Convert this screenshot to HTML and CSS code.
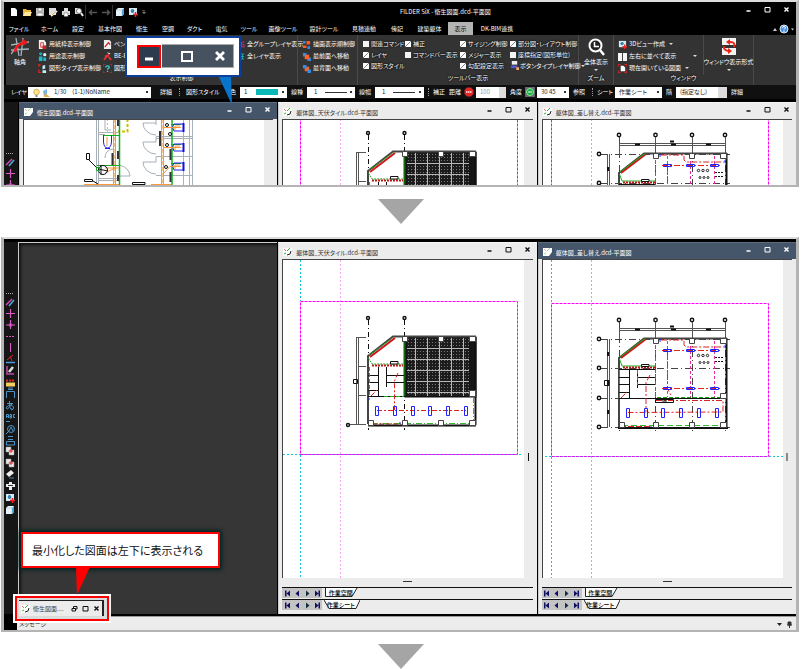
FILE: index.html
```html
<!DOCTYPE html>
<html lang="ja">
<head>
<meta charset="utf-8">
<title>FILDER SiX</title>
<link rel="stylesheet" href="styles.css">
</head>
<body>
<svg class="defs" aria-hidden="true">
  <defs>
    <pattern id="tiles" width="3" height="3" patternUnits="userSpaceOnUse"><rect width="3" height="3" fill="#1c1c1c"/><rect width="1" height="1" fill="#777"/></pattern>
    <pattern id="tilelines" x="404" y="338" width="12" height="11" patternUnits="userSpaceOnUse"><path d="M0 10.500H12M11.500 0V11" stroke="#b8b8b8" fill="none"/></pattern>
    <symbol id="doc" viewBox="0 0 9 9"><path d="M0 1H9V5L6 9H0Z" fill="#fff"/><path d="M1 7l2-1M4 4l3-3" stroke="#2b2" fill="none"/><path d="M1 2l2 2" stroke="#e66"/><path d="M4 8q4 0 4-4" stroke="#222" fill="none"/></symbol>
    <symbol id="docon" viewBox="0 0 9 9"><path d="M0 1H9V5L6 9H0Z" fill="#fff"/><path d="M1 7l2-1M4 4l3-3" stroke="#9d9" fill="none"/><path d="M1 2l2 2" stroke="#eaa"/></symbol>
    <symbol id="min" viewBox="0 0 7 7"><path d="M1.500 5H5.500" stroke="currentColor" stroke-width="1.500"/></symbol>
    <symbol id="max" viewBox="0 0 7 7"><path d="M1 1.500H6V6H1ZM1 1.500H6" fill="none" stroke="currentColor"/></symbol>
    <symbol id="cls" viewBox="0 0 7 7"><path d="M1.500 1.500L5.500 5.500M5.500 1.500L1.500 5.500" stroke="currentColor" stroke-width="1.400"/></symbol>
    <symbol id="rst" viewBox="0 0 7 7"><path d="M2.500 3V1.500H6V4H4.500M1 3.500H4.500V6H1Z" fill="none" stroke="currentColor"/></symbol>
    <symbol id="first" viewBox="0 0 9 9"><path d="M2 1.500H3.500V7.500H2ZM7 1.500V7.500L3.500 4.500Z" fill="#101060"/></symbol>
    <symbol id="prev" viewBox="0 0 9 9"><path d="M6 1.500V7.500L2.500 4.500Z" fill="#101060"/></symbol>
    <symbol id="next" viewBox="0 0 9 9"><path d="M3 1.500V7.500L6.500 4.500Z" fill="#103040"/></symbol>
    <symbol id="last" viewBox="0 0 9 9"><path d="M5.500 1.500H7V7.500H5.500ZM2 1.500V7.500L5.500 4.500Z" fill="#101060"/></symbol>
    <symbol id="search" viewBox="0 0 10 10"><path d="M1 1H6V7H1Z" fill="#ddd"/><circle cx="5" cy="4" r="2.500" fill="#fff" stroke="#777"/><path d="M7 6L9 9" stroke="#eee" stroke-width="2"/></symbol>
    <symbol id="cube" viewBox="0 0 10 10"><path d="M1 3L3 1H9V7L7 9H1Z" fill="#e9f2f8"/><path d="M7 3L9 1V7L7 9Z" fill="#3ba7de"/><path d="M1 3H7V9" stroke="#8bc" fill="none" stroke-width=".5"/></symbol>
    <symbol id="cube2" viewBox="0 0 10 10"><path d="M1 1H9V8H1Z" fill="#cfe8f6"/><circle cx="4.500" cy="4" r="2.500" fill="#38a" stroke="#fff"/><path d="M5 7.500H10M7.500 5V10" stroke="#e22" stroke-width="1.500"/></symbol>
    <symbol id="pages" viewBox="0 0 10 10"><path d="M1 1H6V6H1ZM4 4H9V9H4Z" fill="#e8e8e8" stroke="#999" stroke-width=".5"/><path d="M4 5H8M6 3V7" stroke="#e33"/></symbol>
    <symbol id="front" viewBox="0 0 10 10"><path d="M1 1H5V5H1ZM6 6H10V10H6Z" fill="#2f8fe8"/><path d="M3 3H8V8H3Z" fill="#ff6424"/></symbol>
    <symbol id="back" viewBox="0 0 10 10"><path d="M3 3H8V8H3Z" fill="#ff6424"/><path d="M1 1H5V5H1ZM6 6H10V10H6Z" fill="#2f8fe8"/></symbol>
    <symbol id="order" viewBox="0 0 10 10"><path d="M1 1H4V4H1ZM6 7H9V10H6Z" fill="#2f8fe8"/><path d="M5 1H9V5H5ZM1 6H5V9H1Z" fill="#ff5a2c"/></symbol>
    <symbol id="paper" viewBox="0 0 10 10"><path d="M1 0H7L9 3V10H1Z" fill="#f2f2f2"/><path d="M3 3H6V8H3Z" fill="none" stroke="#d33"/><path d="M5 6H9V10H5Z" fill="#c22"/></symbol>
    <symbol id="usage" viewBox="0 0 10 10"><circle cx="3" cy="2" r="1.800" fill="#19a8c0"/><circle cx="7.500" cy="3" r="1.800" fill="#e8f6f8"/><path d="M1 5H5V10H1ZM6 6H9V10H6Z" fill="#22b7cc"/></symbol>
    <symbol id="type" viewBox="0 0 10 10"><path d="M1 6V10H4M1 3V1H3" stroke="#e22" stroke-width="1.400" fill="none"/><path d="M5 2L8 1V5L5 6ZM5 7H9V10H5Z" fill="#bfeef4"/></symbol>
    <symbol id="pen" viewBox="0 0 10 10"><path d="M1 0H7L9 2V10H1Z" fill="#eee"/><path d="M2 8L6 3L8 5" stroke="#c22" stroke-width="1.400" fill="none"/></symbol>
    <symbol id="beb" viewBox="0 0 10 10"><path d="M1 9L5 4M9 9L6 5M2 5L7 3" stroke="#e33" stroke-width="1.800"/><path d="M5 1L8 2" stroke="#fff"/></symbol>
    <symbol id="quest" viewBox="0 0 10 10"><path d="M0 3V0H3M7 0H10V3M0 7V10H3M7 10H10V7" stroke="#e22" fill="none"/><path d="M3 4Q3 2 5 2Q7 2 7 4Q5 5 5 6.500M5 7.500V9" stroke="#3bd3e0" stroke-width="1.400" fill="none"/></symbol>
    <symbol id="button" viewBox="0 0 10 10"><path d="M2 0H8V4H2Z" fill="#eee"/><path d="M1 5H8V8H1Z" fill="#55c"/><path d="M7 7H10V10H7Z" fill="#fa6"/></symbol>
    <symbol id="halves" viewBox="0 0 10 10"><path d="M0 1H4.500V10H0ZM5.500 1H10V10H5.500Z" fill="#f4f4f4"/></symbol>
    <symbol id="grp" viewBox="0 0 6 10"><path d="M5 2H2V8H5V5H3" stroke="#d3308e" fill="none"/></symbol>
    <symbol id="lay" viewBox="0 0 6 10"><path d="M1 2H5M1 5H5M1 8H5M3 2V8" stroke="#1ab0a8" fill="none"/></symbol>

    <g id="plan-tile" fill="none" stroke="#111">
      <path d="M300.500 260V301M300.500 455V578M283 454.500H523" stroke="#10c8d0" stroke-dasharray="2 2"/>
      <path d="M340.500 260V578" stroke="#f7a8f2" stroke-dasharray="2 2"/>
      <path d="M300.500 301.500H517.500V454.500H300.500Z" stroke="#f0f" stroke-dasharray="3 1"/>
      <path d="M368.500 320V430M404.500 320V430" stroke-dasharray="5 3 1 3"/>
      <g stroke-width="1.400"><circle cx="368" cy="318" r="1.500"/><circle cx="404.500" cy="318" r="1.500"/><circle cx="348" cy="425" r="1.500"/></g>
      <path d="M356.500 337V425M358.500 337V425M350 424.500H366M357 337.500H366M358 366.500H366M358 395.500H366" stroke="#555"/>
      <path d="M353.500 379.500H357.500V383.500H353.500Z"/>
      <rect x="405" y="337" width="71" height="60" fill="#151515"/><rect x="407" y="338" width="62" height="58" fill="url(#tiles)" stroke="none"/><rect x="407" y="338" width="62" height="58" fill="url(#tilelines)" stroke="none"/>
      <path d="M404.500 338V396" stroke="#161" stroke-width="2"/>
      <path d="M368 424V356L393 336.500H476" stroke="#444" stroke-width="2"/>
      <path d="M370 357L395 338" stroke="#d01818" stroke-width="2"/><path d="M369 355L394 337M368.500 358L372 364H403" stroke="#18b018" stroke-dasharray="2 1"/>
      <path d="M372 365.500H403" stroke="#c01818" stroke-dasharray="2 1" stroke-width="2"/>
      <path d="M390.500 361.500H398V364H390.500Z" fill="#fff"/>
      <path d="M368 396.500H476M378.500 367V396M386.500 367V387M368 375.500H379M387 375.500H404M387 382.500H404M368 382.500H379M368 390.500H379"/>
      <path d="M369.500 367V396M384 396.500H404" stroke="#18b018" stroke-dasharray="4 2"/>
      <path d="M398 373L394.500 381V410M371 396L377 390M377 410.500H466" stroke="#d22" stroke-dasharray="5 2 2 2"/>
      <path d="M475.500 337V425" stroke-width="2"/><path d="M473.500 397V424M372 423.500H472" stroke="#3b3" stroke-dasharray="6 2 1 2"/>
      <path d="M372 424H401" stroke="#d22" stroke-dasharray="5 2"/><path d="M368 425.500H476" stroke-width="2"/>
      <g stroke="#22f"><path d="M375.500 406.500h3v9h-3zM393.500 406.500h3v9h-3zM411.500 406.500h3v9h-3zM428.500 406.500h3v9h-3zM446.500 406.500h3v9h-3zM464.500 406.500h3v9h-3z"/><path d="M399 423h2M368 399h2"/></g>
      <g fill="#fff" stroke="#444"><path d="M402.500 336.500h5v5h-5zM438.500 336.500h5v5h-5zM469.500 336.500h6v5h-6zM469.500 390.500h6v6h-6zM368.500 420.500h5v5h-5zM402.500 420.500h5v5h-5zM438.500 420.500h5v5h-5zM469.500 420.500h6v5h-6z"/></g>
    </g>

    <g id="plan-swap" fill="none" stroke="#111">
      <path d="M551.500 260V303M551.500 457V578M541 456.500H785" stroke="#10c8d0" stroke-dasharray="2 2"/>
      <path d="M591.500 260V578" stroke="#f58af0" stroke-dasharray="2 2"/>
      <path d="M551.500 303.500H768.500V456.500H551.500Z" stroke="#f0f" stroke-dasharray="3 1"/>
      <path d="M619.500 322V432M655.500 322V432M692.500 322V432M725.500 322V432M601 339.500H730M601 368.500H730M601 398.500H618M601 427.500H730" stroke-dasharray="7 3 1 3" stroke="#444"/>
      <g stroke-width="1.400"><circle cx="619" cy="320" r="1.700"/><circle cx="655.500" cy="320" r="1.700"/><circle cx="692" cy="320" r="1.700"/><circle cx="725" cy="320" r="1.700"/><circle cx="599" cy="339" r="1.700"/><circle cx="599" cy="368" r="1.700"/><circle cx="599" cy="398" r="1.700"/><circle cx="599" cy="427" r="1.700"/></g>
      <path d="M619.500 328V339M655.500 322V338M692.500 322V338M725.500 322V338M619 328.500H726M619 330.500H726M607.500 339V427M609.500 339V427" stroke="#555"/>
      <path d="M635 329.500h5M671 329.500h5M706 329.500h5M670 326.500h4M608 352v4M608 381v5M608 410v4" stroke-width="2"/>
      <path d="M604.500 380.500H609V385.500H604.500Z"/>
      <path d="M619 427V358L644 338.500H727" stroke="#444" stroke-width="2"/>
      <path d="M621 358L646 339" stroke="#d01818" stroke-width="2"/><path d="M620 357L645 338.500M619.500 359L622 366H655M619.500 370V398M629.500 370V398" stroke="#18b018"/>
      <path d="M623 367.500H655" stroke="#c01818" stroke-dasharray="2 1" stroke-width="2"/>
      <path d="M641.500 364.500H649V366.500H641.500Z" fill="#fff"/>
      <path d="M619 369.500H655M619 398.500H727M629.500 370V398M637.500 370V388M619 377.500H629M638 377.500H655M638 384.500H655M619 384.500H629M619 392.500H629"/>
      <path d="M655.500 339V398M637.500 370V385M657 397.500H724" stroke="#18a018" stroke-dasharray="4 2"/>
      <path d="M667.500 341V397M690.500 341V397M714.500 341V397" stroke="#e62aa0" stroke-dasharray="3 2"/>
      <path d="M662 350.500H720M662 388.500H720M667.500 350V389L671 395M661 340H684V345L686 347H724M650 375L646 382.500V412M621 398L627 392M656 400.500H723V412L628 412.500" stroke="#d22" stroke-dasharray="6 2 2 2"/>
      <g stroke="#22f"><path d="M663.500 349.500h8v2h-8zM686.500 349.500h8v2h-8zM710.500 349.500h8v2h-8zM663.500 387.500h8v2h-8zM686.500 387.500h8v2h-8zM710.500 387.500h8v2h-8zM626.500 408.500h3v9h-3zM644.500 408.500h3v9h-3zM661.500 408.500h3v9h-3zM679.500 408.500h3v9h-3zM697.500 408.500h3v9h-3zM715.500 408.500h3v9h-3zM660 339v3M725 345v3M650 426h2"/></g>
      <g stroke-width=".9"><circle cx="698.500" cy="355.500" r="1.200"/><circle cx="703" cy="355.500" r="1.200"/><circle cx="707.500" cy="355.500" r="1.200"/><circle cx="700" cy="362.500" r="1"/><circle cx="704" cy="362.500" r="1"/><circle cx="708" cy="362.500" r="1"/></g>
      <path d="M715 357.500h9M715 361.500h9" stroke-dasharray="2 1"/>
      <path d="M655.500 399.500H673.500V402.500H655.500ZM662 401h5"/>
      <path d="M620 426.500H650" stroke="#d22" stroke-dasharray="6 2"/><path d="M622 425.500H724" stroke="#3b3" stroke-dasharray="6 3"/>
      <path d="M726.500 338V428M618 428H728" stroke-width="2"/>
      <g fill="#fff" stroke="#444"><path d="M653.500 338.500h5v5h-5zM689.500 338.500h5v5h-5zM720.500 338.500h6v5h-6zM720.500 393.500h6v5h-6zM619.500 422.500h5v5h-5zM653.500 422.500h5v5h-5zM689.500 422.500h5v5h-5zM720.500 422.500h6v5h-6z"/></g>
    </g>

    <g id="plan-toilet" fill="none" stroke="#111">
      <path d="M95.500 119V185M97.500 119V185M188.500 119V185M191.500 119V185M182.500 119V185M155 136.500H191M155 138.500H191M155 156.500H191M155 175.500H191M97 132.500H117M97 134.500H104M97 178.500H118M97 180.500H118" stroke="#a8b0b8"/>
      <path d="M155 119.500V125M155 135A13 12 0 0 1 142 123H155M155 154A13 12 0 0 1 142 142H155V137M155 174A13 12 0 0 1 142 162H155V157M104 130V119M104 130H110M118 165Q128 167 129 176H118M104 158Q104 150 112 149" stroke="#a8b0b8"/>
      <path d="M112.500 119V185M114.500 119V185M160.500 119V185M162.500 119V185" stroke="#f8993c"/><path d="M113.500 119V185M161.500 119V185" stroke="#fbc690" stroke-dasharray="4 2"/>
      <path d="M106.500 119V134" stroke="#f29af0" stroke-dasharray="2 2"/><path d="M126.500 119V131.500H117" stroke="#c9c000" stroke-width="2" stroke-dasharray="3 2"/>
      <path d="M118.500 119V185M171 119V185" stroke="#10b020" stroke-width="1.500"/>
      <path d="M102 135.500H118M96 165.500H118M170 124.500H180M170 144.500H180M170 163.500H180" stroke="#10b020"/>
      <path d="M102.500 135V142Q103 148 106.500 148Q110 148 110.500 142V135M104 148.500H109M182 124H173Q170 127 173 131H182M182 144H173Q170 147 173 151H182M182 163H173Q170 166 173 170H182" stroke="#22e"/>
      <path d="M182.500 123V132M182.500 143V152M182.500 162V171" stroke="#11d" stroke-width="2"/>
      <path d="M162 127.500H180M162 147.500H180M162 174L169 166.500H180M174 130V126H179M174 150V146H179M174 169V165H179M106 137V146M104 168H118M104 173L114 168M83 184.500H118M150 184.500H170" stroke="#f8993c"/>
      <path d="M159 131V146M111.500 153V165M117 119V126M117 151V159M117 175V181M169.500 149V160M169.500 172V182" stroke="#333" stroke-width="2"/>
      <circle cx="102" cy="170" r="4.500"/><path d="M97 169L107 171M100 165V175M88 160L96 168M85.500 153.500H88.500V159.500H85.500ZM83.500 179.500H91.500V181.500H83.500ZM92 181L97 184M131.500 182.500H144V184.500H131.500Z"/>
      <path d="M95.500 167.500H98.500V170.500H95.500Z" stroke="#10b020"/><circle cx="166" cy="125" r="1.500"/><circle cx="166" cy="145" r="1.500"/><circle cx="165" cy="167" r="1.500"/><circle cx="169" cy="134" r="1.500"/>
    </g>

    <g id="tools" fill="none">
      <path d="M6 3.500H14" stroke="#aaa" stroke-dasharray="1 1"/>
      <path d="M6 15L12 9" stroke="#d84bb0" stroke-width="1.500"/><path d="M9 16L14 10" stroke="#4ab0e0" stroke-width="1.500"/>
      <path d="M6 23.500H15M10.500 19V28M6 35H15M10.500 30V39" stroke="#d85cc4" stroke-width="1.200"/><circle cx="10.500" cy="35" r="1.500" stroke="#c852b4"/>
      <path d="M6 46.500H15" stroke="#d85cc4" stroke-dasharray="2 1"/><path d="M10.500 53V62" stroke="#d85cc4"/>
      <path d="M6 72.500H15" stroke="#4a9ae0" stroke-width="1.500"/><path d="M7 70L13 65M10 66L12 71" stroke="#d23"/>
      <path d="M7 76V84H14" stroke="#c04ab0" stroke-width="1.500"/><path d="M9 82L13 77" stroke="#ddd" stroke-width="2.500"/>
      <path d="M6 90.500H14" stroke="#e22" stroke-width="2" stroke-dasharray="2 1"/><path d="M6 94.500H15" stroke="#f4cf5c" stroke-width="4"/>
      <g stroke="#4d94c8"><path d="M6.500 108V101.500H14.500V108M8 99.500H13M8 98H13"/><path d="M7 113.500H13M9.500 111Q9 120 12 119M12 114Q6 122 6.500 117Q11 113 13.500 117Q14 120 11 120"/><path d="M6.500 128V124.500H8.500V128M6.500 126.500H8.500M10 128V124.500H11.500V128H10M10 126.500H11.500M15 124.500H13.500V127.500H15M6 131.500H10"/><circle cx="11" cy="139" r="3.500"/><path d="M9 141L11 137L13 141M6 144L9 141M8 146.500H13M8 149.500H13M6.500 151.500H14.500V155H6.500Z"/></g>
      <use href="#pages" x="5" y="156" width="10" height="10"/><use href="#pages" x="5" y="168" width="10" height="10"/>
      <path d="M6 184L11 180L14 183L9 187Z" fill="#eee"/><path d="M9 188H14" stroke="#48a"/>
      <path d="M6 195.500H15M10.500 192V200" stroke="#eee" stroke-width="3"/><path d="M8 195.500H13" stroke="#333"/>
      <use href="#cube2" x="5" y="203" width="10" height="10"/><use href="#cube" x="5" y="215" width="10" height="10"/>
    </g>
  </defs>
</svg>

<main>
<section class="shot shot-top">
  <header class="titlebar">
    <div class="quick">
      <button aria-label="新規"><svg viewBox="0 0 10 10"><path d="M2 1H6L8 3V9H2Z" fill="#fff"/></svg></button>
      <button aria-label="開く"><svg viewBox="0 0 10 10"><path d="M1 2H4L5 3H9V9H1Z" fill="#e8b63a"/><path d="M3 5H10L8 9H1Z" fill="#ffe9a0"/></svg></button>
      <button aria-label="保存"><svg viewBox="0 0 10 10"><path d="M1 1H9V9H1Z" fill="#c8c8c8"/><path d="M3 1H7V4H3ZM2 6H8V9H2Z" fill="#fff" stroke="#555" stroke-width=".5"/></svg></button>
      <button aria-label="名前を付けて保存"><svg viewBox="0 0 10 10"><path d="M1 1H8V8H1Z" fill="#ddd"/><path d="M3 9L9 4" stroke="#eee" stroke-width="2"/><path d="M4 8L8 4.500" stroke="#da3"/></svg></button>
      <button aria-label="印刷"><svg viewBox="0 0 10 10"><path d="M3 1H7V4H3ZM1 4H9V8H1Z" fill="#ddd"/><path d="M3 6H7V9.500H3Z" fill="#fff" stroke="#555" stroke-width=".5"/></svg></button>
      <button aria-label="検索"><svg><use href="#search"/></svg></button>
      <i class="bar"></i>
      <button aria-label="元に戻す"><svg viewBox="0 0 10 10"><path d="M9 5.500H2M4 3L1.500 5.500L4 8" stroke="#555" fill="none" stroke-width="1.400"/></svg></button>
      <button aria-label="やり直し"><svg viewBox="0 0 10 10"><path d="M1 5.500H8M6 3L8.500 5.500L6 8" stroke="#555" fill="none" stroke-width="1.400"/></svg></button>
      <i class="bar"></i>
      <button aria-label="3D"><svg><use href="#cube"/></svg></button>
      <button aria-label="3D追加"><svg><use href="#cube2"/></svg></button>
      <button aria-label="その他"><svg viewBox="0 0 10 10"><path d="M1 3.500H4M1.500 5H4.500L3 7Z" fill="#777" stroke="#777" stroke-width=".6"/></svg></button>
    </div>
    <h1>FILDER SiX - 衛生図面.dcd-平面図</h1>
    <div class="winbtns"><button aria-label="最小化"><svg><use href="#min"/></svg></button><button aria-label="最大化"><svg><use href="#max"/></svg></button><button aria-label="閉じる"><svg><use href="#cls"/></svg></button></div>
  </header>
  <nav class="tabs">
    <button>ファイル</button><button>ホーム</button><button>設定</button><button>基本作図</button><button>衛生</button><button>空調</button><button>ダクト</button><button>電気</button><button>ツール</button><button>画像ツール</button><button>設計ツール</button><button>見積連動</button><button>傍記</button><button>建築躯体</button><button class="on">表示</button><button>DK-BIM連携</button>
    <button class="help" aria-label="ヘルプ"><svg viewBox="0 0 22 10"><path d="M1 7H5L3 4Z" fill="#ccc"/><circle cx="12" cy="5" r="4" fill="#4a90e0" stroke="#dfeaf8"/><path d="M10.500 4Q10.500 2.500 12 2.500Q13.500 2.500 13.500 4L12 5.500M12 6.500V8" stroke="#fff" fill="none"/><path d="M19 4.500H22L20.500 6.500Z" fill="#ccc"/></svg></button>
  </nav>
  <div class="ribbon">
    <div class="group display">
      <button class="big"><svg viewBox="0 0 18 20"><path d="M5 1L8 19M12 1L10 19M0 8L18 5M0 13L18 12M0 17L6 9" stroke="#9fb4bd" stroke-width="1.300"/><path d="M4 15Q5 7 13 6" stroke="#f01818" stroke-width="2.500" fill="none"/><path d="M11 2L17 5L12 9Z" fill="#f01818"/></svg>軸角</button>
      <div class="col"><button><svg><use href="#paper"/></svg>用紙枠表示制御</button><button><svg><use href="#usage"/></svg>用途表示制御</button><button><svg><use href="#type"/></svg>図形タイプ表示制御</button></div>
      <div class="col"><button><svg><use href="#pen"/></svg>ペン番号</button><button><svg><use href="#beb"/></svg>BE-BRIDGE</button><button><svg><use href="#quest"/></svg>図形スタイル</button></div>
      <div class="col narrow"><button><svg><use href="#grp"/></svg>全グループレイヤ表示</button><button><svg><use href="#lay"/></svg>全レイヤ表示</button></div>
      <div class="col ruled"><button><svg><use href="#order"/></svg>描画表示順制御</button><button><svg><use href="#front"/></svg>最前面へ移動</button><button><svg><use href="#back"/></svg>最背面へ移動</button></div>
      <p>表示制御</p>
    </div>
    <div class="group toolbars">
      <div class="col"><label><input type="checkbox">関連コマンド</label><label><input type="checkbox" checked>レイヤ</label><label><input type="checkbox" checked>図形スタイル</label></div>
      <div class="col"><label><input type="checkbox" checked>補正</label><label><input type="checkbox">コマンドバー表示</label></div>
      <div class="col"><label><input type="checkbox" checked>サイジング制御</label><label><input type="checkbox" checked>メジャー表示</label><label><input type="checkbox" checked>勾配設定表示</label></div>
      <div class="col"><label><input type="checkbox" checked>部分図・レイアウト制御</label><label><input type="checkbox">座標指定(図形単位)</label><button class="more"><svg><use href="#button"/></svg>ボタンタイプレイヤ制御</button></div>
      <p>ツールバー表示</p>
    </div>
    <div class="group zoom">
      <button class="big more-below"><svg viewBox="0 0 18 20"><circle cx="8.500" cy="8.500" r="6" fill="#222" stroke="#fff" stroke-width="2"/><path d="M13 13L17 18" stroke="#fff" stroke-width="2.500"/><path d="M7.500 5V9.500H12" stroke="#fff" stroke-width="1.500" fill="none"/></svg>全体表示</button>
      <p>ズーム</p>
    </div>
    <div class="group window">
      <div class="col"><button class="more"><svg><use href="#cube2"/></svg>3Dビュー作成</button><button class="more far"><svg><use href="#halves"/></svg>左右に並べて表示</button><button class="more"><svg viewBox="0 0 10 10"><path d="M0 3V0H3M7 0H10V3M0 7V10H3M7 10H10V7" stroke="#e22" fill="none" stroke-width="1.500"/><path d="M3 2H6L8 4V8H3Z" fill="#fff"/></svg>現在開いている図面</button></div>
      <span class="split"></span>
      <button class="big more-below"><svg viewBox="0 0 18 20"><path d="M2 1H16V8H2ZM2 11H16V18H2Z" fill="#f4f4f4"/><path d="M4 9Q3 13 8 14M14 10Q16 5 10 5" stroke="#e21" stroke-width="2" fill="none"/><path d="M8 11L12 14L8 17ZM10 2L6 5L10 8Z" fill="#e21"/></svg>ウィンドウ表示形式</button>
      <p>ウィンドウ</p>
    </div>
  </div>
  <div class="toolbar">
    <label for="layer">レイヤ</label><span class="pick bulb"><svg viewBox="0 0 20 10"><circle cx="4.500" cy="4" r="2.800" fill="#ffe58a" stroke="#b98a20" stroke-width=".6"/><path d="M3.500 7H5.500V9H3.500Z" fill="#888"/><path d="M11 3L15 1V7L12 9Z" fill="#7ab4e4"/><path d="M13 5L18 9H12Z" fill="#e8b040"/></svg><select id="layer"><option>1/30　(1-1)NoName</option></select></span>
    <button>詳細</button><i class="grip"></i><span>図形スタイル</span>
    <label for="color">色</label><select id="color" class="teal"><option>1</option></select>
    <label for="ltype">線種</label><select id="ltype" class="line"><option>1</option></select>
    <label for="lwid">線幅</label><select id="lwid" class="line"><option>1</option></select>
    <i class="grip"></i><span>補正</span><label for="dist">距離</label><svg class="dot" viewBox="0 0 10 10"><path d="M3 .5H7L9.500 3V7L7 9.500H3L.5 7V3Z" fill="#e02828"/><path d="M2 5H8" stroke="#fbb" stroke-width="2" stroke-dasharray="1.500 .5"/></svg><select id="dist" class="dim"><option>100</option></select>
    <label for="angle">角度</label><svg class="dot" viewBox="0 0 10 10"><path d="M0 0H10V10H0Z" fill="#667"/><circle cx="5" cy="5" r="3.500" fill="#1a4" stroke="#8e8"/><path d="M3 5H7" stroke="#fff"/></svg><select id="angle"><option>30 45</option></select>
    <button>参照</button><i class="grip"></i>
    <label for="sheet">シート</label><select id="sheet"><option>作業シート</option></select>
    <label for="floor">階</label><select id="floor" class="dimarrow"><option>(指定なし)</option></select>
    <button>詳細</button>
  </div>
  <div class="desk">
    <svg class="rail"><use href="#tools" y="48" x="-4"/></svg>
    <article class="win active">
      <header><svg><use href="#docon"/></svg><h2>衛生図面.dcd-平面図</h2><div class="winbtns"><button aria-label="最小化"><svg><use href="#min"/></svg></button><button aria-label="最大化"><svg><use href="#max"/></svg></button><button aria-label="閉じる"><svg><use href="#cls"/></svg></button></div></header>
      <div class="view"><svg><use href="#plan-toilet" x="-23" y="-120"/></svg></div>
    </article>
    <article class="win">
      <header><svg><use href="#doc"/></svg><h2>躯体図_天伏タイル.dcd-平面図</h2><div class="winbtns"><button aria-label="最小化"><svg><use href="#min"/></svg></button><button aria-label="最大化"><svg><use href="#max"/></svg></button><button aria-label="閉じる"><svg><use href="#cls"/></svg></button></div></header>
      <div class="view"><svg><use href="#plan-tile" x="-283" y="-305"/></svg></div>
    </article>
    <article class="win">
      <header><svg><use href="#doc"/></svg><h2>躯体図_差し替え.dcd-平面図</h2><div class="winbtns"><button aria-label="最小化"><svg><use href="#min"/></svg></button><button aria-label="最大化"><svg><use href="#max"/></svg></button><button aria-label="閉じる"><svg><use href="#cls"/></svg></button></div></header>
      <div class="view"><svg><use href="#plan-swap" x="-543" y="-305"/></svg></div>
    </article>
  </div>
  <div class="callout blue">
    <div class="enlarged"><span class="pickmin"><svg><use href="#min"/></svg></span><span><svg><use href="#max"/></svg></span><span><svg><use href="#cls"/></svg></span></div>
    <svg class="tail" viewBox="0 0 14 28"><path d="M0 0H12L13 28Z" fill="#0874cc"/></svg>
  </div>
</section>

<svg class="down" viewBox="0 0 46 25"><path d="M0 0H46L23 25Z" fill="#a5a5a5"/></svg>

<section class="shot shot-bottom">
  <div class="desk">
    <svg class="rail"><use href="#tools" y="48" x="-4"/></svg>
    <div class="empty"></div>
    <article class="win">
      <header><svg><use href="#doc"/></svg><h2>躯体図_天伏タイル.dcd-平面図</h2><div class="winbtns"><button aria-label="最小化"><svg><use href="#min"/></svg></button><button aria-label="最大化"><svg><use href="#max"/></svg></button><button aria-label="閉じる"><svg><use href="#cls"/></svg></button></div></header>
      <div class="view"><svg><use href="#plan-tile" x="-283" y="-260"/></svg><i class="thumb"></i></div>
      <div class="hscroll"><i></i></div>
      <div class="sheets"><button aria-label="先頭"><svg><use href="#first"/></svg></button><button aria-label="前"><svg><use href="#prev"/></svg></button><button aria-label="次"><svg><use href="#next"/></svg></button><button aria-label="末尾"><svg><use href="#last"/></svg></button><button class="sheet"><svg viewBox="0 0 36 12"><path d="M1.500 0V8.500H28L33 0" fill="#fff" stroke="#222"/></svg>作業空間</button></div>
      <div class="sheets"><button aria-label="先頭"><svg><use href="#first"/></svg></button><button aria-label="前"><svg><use href="#prev"/></svg></button><button aria-label="次"><svg><use href="#next"/></svg></button><button aria-label="末尾"><svg><use href="#last"/></svg></button><button class="sheet"><svg viewBox="0 0 36 12"><path d="M0 0L5 8.500H32L36 0" fill="#fff" stroke="#222"/></svg>作業シート</button></div>
    </article>
    <article class="win active">
      <header><svg><use href="#docon"/></svg><h2>躯体図_差し替え.dcd-平面図</h2><div class="winbtns"><button aria-label="最小化"><svg><use href="#min"/></svg></button><button aria-label="最大化"><svg><use href="#max"/></svg></button><button aria-label="閉じる"><svg><use href="#cls"/></svg></button></div></header>
      <div class="view"><svg><use href="#plan-swap" x="-543" y="-260"/></svg><i class="thumb grey"></i></div>
      <div class="hscroll"><i></i></div>
      <div class="sheets"><button aria-label="先頭"><svg><use href="#first"/></svg></button><button aria-label="前"><svg><use href="#prev"/></svg></button><button aria-label="次"><svg><use href="#next"/></svg></button><button aria-label="末尾"><svg><use href="#last"/></svg></button><button class="sheet"><svg viewBox="0 0 36 12"><path d="M1.500 0V8.500H28L33 0" fill="#fff" stroke="#222"/></svg>作業空間</button></div>
      <div class="sheets"><button aria-label="先頭"><svg><use href="#first"/></svg></button><button aria-label="前"><svg><use href="#prev"/></svg></button><button aria-label="次"><svg><use href="#next"/></svg></button><button aria-label="末尾"><svg><use href="#last"/></svg></button><button class="sheet"><svg viewBox="0 0 36 12"><path d="M0 0L5 8.500H32L36 0" fill="#fff" stroke="#222"/></svg>作業シート</button></div>
    </article>
  </div>
  <footer class="message"><span>メッセージ</span><svg viewBox="0 0 18 8"><path d="M2 3H7L4.500 6Z" fill="#222"/><path d="M13 2H16V5H13ZM12 5H17M14.500 5V8" fill="#333" stroke="#333"/></svg></footer>
  <div class="mini">
    <div class="minibar"><svg><use href="#doc"/></svg><span>衛生図面....</span><button aria-label="元に戻す"><svg><use href="#rst"/></svg></button><button aria-label="最大化"><svg><use href="#max"/></svg></button><button aria-label="閉じる"><svg><use href="#cls"/></svg></button></div>
  </div>
  <div class="callout red">最小化した図面は左下に表示される<svg class="tail" viewBox="0 0 14 28"><path d="M0 0H14L1 28Z" fill="#f00"/></svg></div>
</section>

<svg class="down" viewBox="0 0 46 25"><path d="M0 0H46L23 25Z" fill="#a5a5a5"/></svg>
</main>
</body>
</html>
```
FILE: styles.css
```css
* { box-sizing: border-box; }
body {
  margin: 0;
  background: #fff;
  font-family: "Noto Sans CJK JP", "Liberation Sans", sans-serif;
  font-size: 6px;
  line-height: 8px;
  font-feature-settings: "palt";
  overflow-x: hidden;
}
h1, h2, p { margin: 0; font-size: inherit; font-weight: 400; }
button, select, input { font: inherit; color: inherit; margin: 0; padding: 0; border: 0; background: none; }
button { display: flex; align-items: center; justify-content: center; white-space: nowrap; }
svg { display: block; flex: none; }
.defs { position: absolute; width: 0; height: 0; }

.shot {
  position: relative;
  overflow: hidden;
  margin: 0 2px 0 1px;
  border: solid #b4b4b4;
  border-width: 2px 3px;
  border-top-color: #dcdcdc;
  background: #000;
  color: #fff;
}
.shot-top { height: 187px; }
.down { width: 46px; height: 25px; margin: 12px auto 13px; }
.shot-bottom + .down { margin-bottom: 0; }

.titlebar { display: flex; align-items: center; justify-content: space-between; height: 20px; }
.quick { display: flex; align-items: center; width: 380px; padding-left: 3px; }
.quick button { width: 13px; }
.quick svg { width: 10px; height: 10px; }
.bar { width: 1px; height: 14px; background: #333; }
.titlebar h1 { flex: 1; padding-left: 16px; }
.winbtns { display: flex; align-self: flex-start; }
.winbtns button { width: 19px; height: 15px; }
.winbtns svg { width: 7px; height: 7px; }

.tabs {
  display: grid;
  grid-template-columns: 30px 31px 26px 38px 26px 26px 27px 27px 28px 40px 42px 38px 28px 37px 25px 48px 1fr;
  height: 13px;
}
.tabs .on { background: #b4b4b4; color: #111; }
.tabs .help { justify-content: flex-end; padding-right: 2px; }
.help svg { width: 22px; height: 10px; }

.ribbon { display: flex; height: 50px; margin-left: 2px; background: #333; text-shadow: 0 0 2px #000, 0 0 2px #000; }
.group { position: relative; display: flex; border-right: 1px solid #4a4a4a; }
.group p { position: absolute; inset: auto 0 3px; text-align: center; }
.display { width: 352px; }
.toolbars { width: 221px; }
.zoom { width: 35px; }
.window { width: 140px; }
.col { display: flex; flex-direction: column; padding: 3px 0 0 4px; width: 65px; }
.col button, .col label { display: flex; justify-content: flex-start; align-items: center; height: 12px; gap: 2px; white-space: nowrap; }
.col svg { width: 9px; height: 9px; }
.big { flex-direction: column; justify-content: flex-start; width: 28px; padding-top: 2px; }
.big svg { width: 18px; height: 20px; margin-bottom: 1px; }
.display .col:nth-of-type(2) { width: 141px; }
.display .narrow { width: 57px; padding-left: 0; }
.narrow svg { width: 5px; }
.display .ruled { border-left: 1px solid #4a4a4a; width: 58px; }
.toolbars .col { padding-left: 5px; width: 43px; }
.toolbars .col button, .toolbars .col label { height: 11px; }
.toolbars .col button { gap: 1px; }
.toolbars .col:nth-of-type(2) { width: 54px; padding-left: 4px; }
.toolbars .col:nth-of-type(3) { width: 52px; }
.toolbars .col:nth-of-type(4) { width: 71px; padding-left: 3px; }
.col input { appearance: none; flex: none; width: 6px; height: 6px; background: #f4f4f4; }
.col input:checked { background: linear-gradient(135deg, #fff 44%, #888 44%, #888 56%, #fff 56%); }
.more::after, .more-below::after { content: ""; flex: none; border: solid transparent; border-width: 2px 2px 0; border-top-color: #ddd; margin-left: 2px; }
.toolbars .more::after { margin-left: 0; }
.more.far::after { margin-left: auto; }
.more-below::after { margin: 3px 0 0; }
.zoom .big { width: 34px; }
.window .col { width: 83px; }
.split { width: 7px; height: 40px; border-right: 1px solid #4a4a4a; }
.window .big { width: 49px; }

.toolbar {
  display: grid;
  grid-template-columns: 17px 132px 19px 7px 44px 10px 51px 16px 52px 16px 53px 5px 16px 15px 12px 34px 15px 12px 36px 19px 5px 18px 51px 10px 55px 14px;
  align-items: center;
  justify-items: start;
  height: 14px;
  padding-left: 7px;
  background: #101010;
  white-space: nowrap;
}
.toolbar select {
  appearance: none;
  width: calc(100% - 4px);
  height: 11px;
  padding-left: 4px;
  background: linear-gradient(#333, #333) right 3px center / 2px 2px no-repeat, #fff;
  color: #222;
}
.toolbar .teal { background: linear-gradient(#333, #333) right 3px center / 2px 2px no-repeat, linear-gradient(#0bb8b8, #0bb8b8) 16px center / 22px 6px no-repeat, #fff; }
.toolbar .line { background: linear-gradient(#333, #333) right 3px center / 2px 2px no-repeat, linear-gradient(#333, #333) 18px center / 22px 1px no-repeat, #fff; padding-left: 7px; }
.toolbar .dim { background: linear-gradient(90deg, #fff 75%, #ddd 75%); color: #999; }
.toolbar .dimarrow { background: linear-gradient(90deg, #fff 82%, #ddd 82%); }
.pick { position: relative; width: 127px; }
.pick svg { position: absolute; left: 4px; top: 1px; width: 20px; height: 10px; }
.toolbar .pick select { display: block; width: 123px; padding-left: 26px; }
.dot { width: 10px; height: 10px; }
.grip { width: 1px; height: 8px; border-left: 1px dotted #999; }

.desk { display: grid; grid-template-columns: 14px 1fr 1fr 1fr; padding-top: 3px; }
.rail { width: 14px; height: 100%; background: #161616; }
.win { display: flex; flex-direction: column; min-width: 0; padding: 0 4px 3px; margin-left: 1px; border-left: 1px solid #ccc; background: #ececec; color: #333; }
.win > header { display: flex; align-items: center; height: 17px; margin: 0 -4px 0 -5px; padding-left: 5px; border-top: 1px solid #f6f6f6; }
.win > header > svg { width: 9px; height: 9px; margin-right: 4px; }
.win h2 { flex: 1; padding-top: 3px; }
.win header .winbtns { color: #111; }
.win .winbtns button { height: 13px; }
.active > header { background: #46566a; border-color: #5c6c80; color: #fff; }
.active > header .winbtns { color: #fff; }
.view { display: flex; border: solid #444; border-width: 1px 0 0 1px; margin-left: -1px; }
.view > svg { width: calc(100% - 9px); height: 318px; background: #fff; }
.shot-bottom .view { position: relative; }
.thumb { position: absolute; right: 4px; top: 193px; width: 1px; height: 8px; background: #111; }
.thumb.grey { width: 2px; background: #888; }
.hscroll { height: 9px; }
.hscroll i { display: block; width: 9px; height: 1px; margin: 3px auto 0; background: #333; }
.sheets { display: flex; height: 12px; margin-left: -1px; border-top: 1px solid #111; }
.sheets button { width: 10px; height: 10px; background: #c4c4c4; }
.sheets button svg { width: 9px; height: 9px; }
.sheets .sheet { position: relative; z-index: 0; width: 36px; margin-left: 2px; padding-right: 3px; background: none; color: #000; font-weight: 500; }
.sheets .sheet svg { position: absolute; left: 0; top: 0; z-index: -1; width: 36px; height: 12px; }
.empty { border: solid #ccc; border-width: 1px 0 0 1px; background: #363636; box-shadow: inset 2px 2px 3px #111; }
.message { display: flex; align-items: center; justify-content: space-between; height: 14px; margin: 2px 0 0 13px; border-top: 1px solid #999; background: #ececec; color: #222; padding: 0 3px 0 2px; }
.message svg { width: 18px; height: 8px; }

.callout { position: absolute; background: #fff; }
.callout .tail { position: absolute; width: 14px; height: 28px; }
.blue { left: 121px; top: 34px; width: 116px; height: 41px; padding: 6px 5px 7px 9px; border: 2px solid #0c3f9c; }
.blue .tail { left: 92px; top: 39px; }
.enlarged { display: flex; align-items: center; justify-content: space-between; height: 100%; border: 1px solid #aaa; background: #46525f; color: #fff; padding-right: 6px; }
.enlarged svg { width: 14px; height: 14px; }
.enlarged .pickmin { display: flex; align-items: center; justify-content: center; width: 24px; height: 23px; border: 2px solid #f00; outline: 1px solid #fff; background: #2c3c4e; }
.red { left: 17px; top: 293px; width: 199px; height: 36px; padding: 0 9px; border: 2px solid #f00; border-radius: 1px; color: #111; font-size: 11px; line-height: 32px; white-space: nowrap; box-shadow: 0 0 4px 2px #022; }
.red .tail { left: 53px; top: 33px; }
.mini { position: absolute; left: 11px; top: 357px; width: 94px; height: 25px; padding: 2px 3px 3px 2px; border: 2px solid #f00; outline: 2px solid #fff; background: #d8dcdc; }
.minibar { display: flex; align-items: center; height: 16px; padding-left: 2px; border: solid #222; border-width: 1px 2px 0 0; background: #ececec; color: #444; }
.minibar span { flex: 1; padding-left: 3px; }
.minibar > svg { width: 9px; height: 9px; }
.minibar button { width: 11px; color: #111; }
.minibar button svg { width: 7px; height: 7px; }
```
